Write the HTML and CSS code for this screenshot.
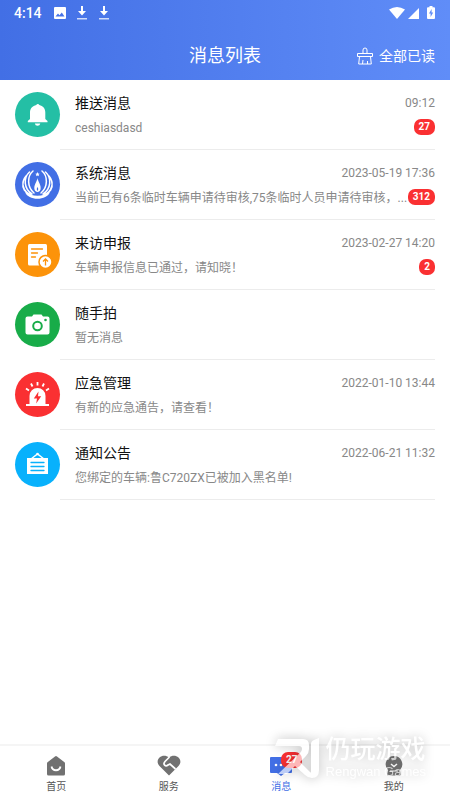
FILE: index.html
```html
<!DOCTYPE html>
<html lang="zh-CN">
<head>
  <meta charset="UTF-8" />
  <meta name="viewport" content="width=device-width, initial-scale=1.0"/>
  <title>消息列表</title>
  <link rel="stylesheet" href="styles.css">
</head>
<body>
<header class="header">
  <div class="status-bar">
    <span class="clock">4:14</span>
    <div class="status-left">
      <svg width="12" height="12" viewBox="0 0 12 12"><path fill="#fff" fill-rule="evenodd" d="M1 0h10a1 1 0 0 1 1 1v10a1 1 0 0 1-1 1H1a1 1 0 0 1-1-1V1a1 1 0 0 1 1-1zM1.500 9.500h9L7.800 5.500 5.500 8.300 4 6.500z"/></svg>
      <svg width="12" height="14" viewBox="0 0 12 14"><path fill="#fff" d="M5 0h2v5h3L6 9.500 2 5h3z"/><path fill="#fff" opacity=".75" d="M1 12h10v1.500H1z"/></svg>
      <svg width="12" height="14" viewBox="0 0 12 14"><path fill="#fff" d="M5 0h2v5h3L6 9.500 2 5h3z"/><path fill="#fff" opacity=".75" d="M1 12h10v1.500H1z"/></svg>
    </div>
    <div class="status-right">
      <svg width="16" height="12" viewBox="0 0 16 12"><path fill="#fff" d="M0 2.500Q8-2.500 16 2.500L8 12z"/></svg>
      <svg width="11" height="12" viewBox="0 0 11 12"><path fill="#fff" d="M11 1v11H0z"/></svg>
      <svg class="battery" width="8" height="13" viewBox="0 0 8 13"><path fill="#fff" fill-rule="evenodd" d="M2.500 0h3v1.200H7a1 1 0 0 1 1 1V12a1 1 0 0 1-1 1H1a1 1 0 0 1-1-1V2.200a1 1 0 0 1 1-1h1.500zM4.600 3L2 7.500h1.600V11L6.200 6.500H4.600z"/></svg>
    </div>
  </div>
  <div class="title-bar">
    <h1>消息列表</h1>
    <button class="read-all" type="button">
      <svg width="16" height="18" viewBox="0 0 16 18" fill="none" stroke="#fff" stroke-width="1"><path d="M6 6.500V3a2 2 0 0 1 4 0v3.500M.5 6.500h15v3H.5zM2.500 9.500l-.8 7.500h12.600l-.8-7.500M5.500 17l.5-4M10.500 17v-3"/></svg>
      <span>全部已读</span>
    </button>
  </div>
</header>

<main class="list">
  <a class="item" href="#push">
    <span class="avatar teal">
      <svg width="45" height="45" viewBox="0 0 45 45"><path fill="#fff" d="M21.300 13a1.600 1.600 0 0 1 3 0c3.700.8 6 3.600 6 7.500v6.500l2.200 2v1.200H12.800V29l2.200-2v-6.500c0-3.900 2.600-6.700 6.300-7.500zM19.800 31.500h5.500a2.800 2.800 0 0 1-5.500 0z"/></svg>
    </span>
    <span class="content">
      <span class="line"><span class="name">推送消息</span><span class="time">09:12</span></span>
      <span class="line"><span class="text">ceshiasdasd</span><span class="badge">27</span></span>
    </span>
  </a>
  <a class="item" href="#system">
    <span class="avatar blue">
      <svg width="45" height="45" viewBox="0 0 45 45"><g fill="none" stroke="#fff" stroke-width="1.500" stroke-linecap="round"><path d="M18 9C12 14 12 25 19 31M27 9c6 5 6 16-1 22M14.500 10C8 16 9 27 17 32M30.500 10c6.500 6 5.500 17-2.500 22M11 14C6 20 7 29 16 33M34 14c5 6 4 15-5 19M8 20c-1 6 2 11 8 13M37 20c1 6-2 11-8 13"/></g><path fill="#fff" d="M10 30c7 5 18 5 25 0-3 9-22 9-25 0zM22.500 16c.5 4 4 7 3 11.500-.4 1.500-1.500 2.500-3 2.500s-2.600-1-3-2.500c-1-4.500 2.500-7.500 3-11.500zM22.500 10l.7 1.500 1.500.2-1.100 1 .3 1.600-1.400-.8-1.400.8.300-1.600-1.100-1 1.500-.2z"/><path fill="#426fe5" d="M22.500 25c.8 1.200 1 2.800 0 4-1-1.200-.8-2.800 0-4z"/></svg>
    </span>
    <span class="content">
      <span class="line"><span class="name">系统消息</span><span class="time">2023-05-19 17:36</span></span>
      <span class="line"><span class="text">当前已有6条临时车辆申请待审核,75条临时人员申请待审核，...</span><span class="badge">312</span></span>
    </span>
  </a>
  <a class="item" href="#visit">
    <span class="avatar orange">
      <svg width="45" height="45" viewBox="0 0 45 45"><rect x="13" y="12" width="19" height="21.500" rx="1.500" fill="#fff"/><g stroke="#fc930a" stroke-width="1.300" stroke-linecap="round"><path d="M16.500 17h11M16.500 21h6M16.500 25h4"/></g><circle cx="30.500" cy="30" r="6.500" fill="#fff" stroke="#fc930a" stroke-width="1.500"/><path d="M30.500 33.500v-6M28 29.500l2.500-2.500 2.500 2.500" fill="none" stroke="#fc930a" stroke-width="1.300"/></svg>
    </span>
    <span class="content">
      <span class="line"><span class="name">来访申报</span><span class="time">2023-02-27 14:20</span></span>
      <span class="line"><span class="text">车辆申报信息已通过，请知晓！</span><span class="badge">2</span></span>
    </span>
  </a>
  <a class="item" href="#photo">
    <span class="avatar green">
      <svg width="45" height="45" viewBox="0 0 45 45"><path fill="#fff" d="M12.500 14.500H17l1.500-2h8l1.500 2h4.500a2 2 0 0 1 2 2v14a2 2 0 0 1-2 2h-20a2 2 0 0 1-2-2v-14a2 2 0 0 1 2-2z"/><circle cx="22.500" cy="24" r="4.300" fill="none" stroke="#18ac49" stroke-width="2"/><circle cx="30.500" cy="18" r="1.300" fill="#18ac49"/></svg>
    </span>
    <span class="content">
      <span class="line"><span class="name">随手拍</span></span>
      <span class="line"><span class="text">暂无消息</span></span>
    </span>
  </a>
  <a class="item" href="#emergency">
    <span class="avatar red">
      <svg width="45" height="45" viewBox="0 0 45 45"><path fill="#fff" d="M14.500 32v-8a8 8 0 0 1 16 0v8H34v2H11v-2z"/><path stroke="#fff" stroke-width="1.800" d="M22.500 10v3.500M16 11.500l1.500 3M29 11.500l-1.500 3M11 16.500l3 2M34 16.500l-3 2"/><path fill="#fa3032" d="M23.500 19.500L18.800 26.500h3.200l-.8 5 5-7.200h-3.200z"/></svg>
    </span>
    <span class="content">
      <span class="line"><span class="name">应急管理</span><span class="time">2022-01-10 13:44</span></span>
      <span class="line"><span class="text">有新的应急通告，请查看！</span></span>
    </span>
  </a>
  <a class="item" href="#notice">
    <span class="avatar sky">
      <svg width="45" height="45" viewBox="0 0 45 45"><path fill="none" stroke="#fff" stroke-width="1.500" d="M16 17l6.500-5 6.500 5"/><circle cx="22.500" cy="12" r="1.300" fill="#fff"/><path fill="#fff" d="M12 16h21v16H12z"/><path stroke="#08b1fc" stroke-width="1.300" stroke-linecap="round" d="M16 20.500h13M16 24.500h13M16 28.500h13"/></svg>
    </span>
    <span class="content">
      <span class="line"><span class="name">通知公告</span><span class="time">2022-06-21 11:32</span></span>
      <span class="line"><span class="text">您绑定的车辆:鲁C720ZX已被加入黑名单!</span></span>
    </span>
  </a>
</main>

<nav class="tabs">
  <a class="tab" href="#home">
    <svg width="24" height="22" viewBox="0 0 24 22"><path fill="#717171" d="M11 1.400a1.600 1.600 0 0 1 2 0l7.500 5.800q.5.500.5 1.200V19q0 1.500-1.500 1.500h-15Q3 20.500 3 19V8.400q0-.7.5-1.200z"/><path d="M7.500 11.500c1 5 8 5 9 0" fill="none" stroke="#fff" stroke-width="1.800"/></svg>
    <span>首页</span>
  </a>
  <a class="tab" href="#service">
    <svg width="24" height="22" viewBox="0 0 24 22"><path fill="#717171" d="M12 2.300C15 .2 19 .2 21.500 2.500s2.500 6 0 8.500L12 20.500 2.500 11C0 8.500 0 4.800 2.500 2.500S9 .2 12 2.300z"/><path d="M12.500 2L8 6.500c-2.500 3 .5 5.500 3 3.500l2-1 5.500 5" fill="none" stroke="#fff" stroke-width="1.700"/></svg>
    <span>服务</span>
  </a>
  <a class="tab active" href="#message">
    <svg width="24" height="22" viewBox="0 0 24 22"><path fill="#426fe5" d="M2 2h20q1 0 1 1v14q0 1-1 1h-6l-4 3-4-3H2q-1 0-1-1V3q0-1 1-1z"/><circle cx="7" cy="10" r="1.300" fill="#fff"/><circle cx="12" cy="10" r="1.300" fill="#fff"/><circle cx="17" cy="10" r="1.300" fill="#fff"/></svg>
    <span class="tab-badge badge">27</span>
    <span>消息</span>
  </a>
  <a class="tab" href="#mine">
    <svg width="24" height="22" viewBox="0 0 24 22"><path fill="#717171" d="M12 1a8.300 8.300 0 0 1 6 14l1 5.500H5L6 15a8.300 8.300 0 0 1 6-14z"/><path d="M9 9l3 2.500L15 9" fill="none" stroke="#fff" stroke-width="1.500"/><path d="M8 16h8" stroke="#fff" stroke-width="1"/></svg>
    <span>我的</span>
  </a>
</nav>

<div class="watermark">
  <svg width="46" height="42" viewBox="0 0 46 42" fill="#fff"><path d="M4 1h25q6 0 6 6v4q0 4-3 7l-6 6 10 10q1 1 1 0V6q0-3 3-4l5-2v32q0 8-7 8-4 0-7-3l-10-9-8 8H4l22-21q2-2 2-4 0-3-3-3H1z"/></svg>
  <div>
    <div class="mark-name">仍玩游戏</div>
    <div class="mark-sub">Rengwan Games</div>
  </div>
</div>
</body>
</html>
```
FILE: styles.css
```css
* {
  box-sizing: border-box;
}

body {
  margin: 0;
  min-height: 100vh;
  display: flex;
  flex-direction: column;
  background-color: #fff;
  font-family: Roboto, "Noto Sans CJK SC", sans-serif;
  color: #111;
}

a {
  color: inherit;
  text-decoration: none;
}

svg {
  display: block;
  flex-shrink: 0;
}

.header {
  background: linear-gradient(90deg, #426fe5, #608df8);
  color: #fff;
}

.status-bar {
  display: flex;
  align-items: center;
  height: 25px;
  padding: 0 15px 0 14px;
}

.clock {
  font-size: 14px;
  font-weight: 500;
}

.status-left {
  display: flex;
  align-items: center;
  gap: 10px;
  margin-left: 12px;
}

.status-right {
  display: flex;
  align-items: center;
  gap: 3px;
  margin-left: auto;
}

.battery {
  margin-left: 5px;
}

.title-bar {
  display: grid;
  grid-template-columns: 1fr auto 1fr;
  align-items: center;
  height: 55px;
  padding: 6px 15px 0;
}

h1 {
  grid-column: 2;
  margin: 0;
  font-size: 18px;
  font-weight: 400;
  line-height: 24px;
}

.read-all {
  display: flex;
  align-items: center;
  justify-self: end;
  gap: 6px;
  padding: 0;
  border: none;
  background: none;
  color: #fff;
  font-family: inherit;
  font-size: 14px;
  line-height: 20px;
  cursor: pointer;
}

.list {
  flex: 1;
}

.item {
  display: flex;
  height: 70px;
  padding: 0 15px;
}

.avatar {
  flex-shrink: 0;
  width: 45px;
  height: 45px;
  margin-top: 12px;
  border-radius: 50%;
}

.teal { background-color: #24bfa5; }
.blue { background-color: #426fe5; }
.orange { background-color: #fc930a; }
.green { background-color: #18ac49; }
.red { background-color: #fa3032; }
.sky { background-color: #08b1fc; }

.content {
  flex: 1;
  min-width: 0;
  padding: 13px 0 0 15px;
  border-bottom: 1px solid #ececec;
}

.line {
  display: flex;
  align-items: center;
  justify-content: space-between;
  height: 20px;
  line-height: 20px;
}

.line + .line {
  margin-top: 4px;
}

.name {
  font-size: 14px;
}

.time,
.text {
  font-size: 12px;
  line-height: 22px;
  color: #888;
}

.text {
  white-space: nowrap;
}

.line .text {
  padding-top: 2px;
}

.badge {
  flex-shrink: 0;
  height: 16px;
  padding: 0 5px;
  border-radius: 7px;
  background-color: #fa3032;
  color: #fff;
  font-size: 10px;
  font-weight: 700;
  line-height: 16px;
}

.tabs {
  display: flex;
  height: 56px;
  border-top: 2px solid #f5f5f5;
}

.tab {
  position: relative;
  flex: 1;
  display: flex;
  flex-direction: column;
  align-items: center;
  padding-top: 9px;
  font-size: 10px;
  line-height: 16px;
  color: #555;
}

.tab svg {
  margin-bottom: 2px;
}

.tab.active {
  color: #426fe5;
}

.tab-badge {
  position: absolute;
  top: 6px;
  left: 56px;
}

.watermark {
  position: fixed;
  right: 24px;
  bottom: 20px;
  display: flex;
  align-items: flex-end;
  gap: 6px;
  color: #fff;
  opacity: 0.65;
  filter: drop-shadow(0 0 6px rgba(0, 0, 0, 0.4));
  pointer-events: none;
}

.mark-name {
  font-size: 25px;
  font-weight: 500;
  line-height: 28px;
}

.mark-sub {
  font-family: "Liberation Sans", sans-serif;
  font-size: 13px;
  line-height: 16px;
  text-align: right;
}
```
